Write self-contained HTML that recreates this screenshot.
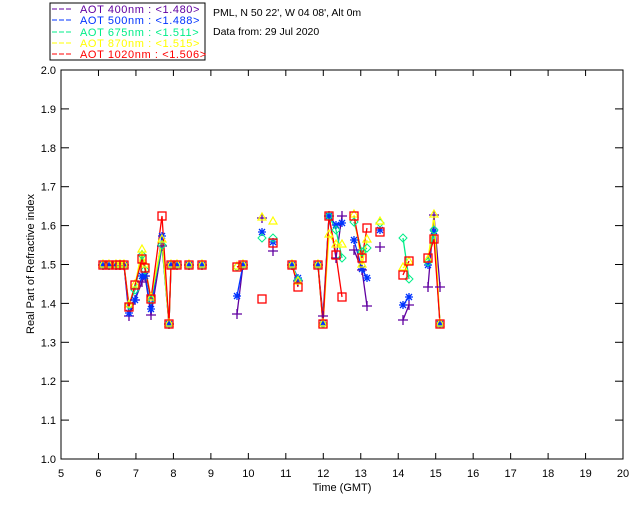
<!DOCTYPE html>
<html><head><meta charset="utf-8"><style>
html,body{margin:0;padding:0;background:#fff;width:640px;height:512px;overflow:hidden}
svg{display:block}
text{font-family:"Liberation Sans",sans-serif;font-size:11px}
.lg text{font-size:11px;letter-spacing:0.6px}
</style></head><body>
<svg id="s" width="640" height="512" xmlns="http://www.w3.org/2000/svg">
<rect x="50" y="3" width="155" height="57" fill="#fff" stroke="#000" stroke-width="1"/>
<g class="lg">
<line x1="52" y1="9" x2="73" y2="9" stroke="#6000a0" stroke-dasharray="5,2"/>
<text x="80" y="13" fill="#6000a0">AOT  400nm : &lt;1.480&gt;</text>
<line x1="52" y1="20" x2="73" y2="20" stroke="#0033ff" stroke-dasharray="5,2"/>
<text x="80" y="24" fill="#0033ff">AOT  500nm : &lt;1.488&gt;</text>
<line x1="52" y1="32" x2="73" y2="32" stroke="#00ee88" stroke-dasharray="5,2"/>
<text x="80" y="36" fill="#00ee88">AOT  675nm : &lt;1.511&gt;</text>
<line x1="52" y1="43" x2="73" y2="43" stroke="#ffff00" stroke-dasharray="5,2"/>
<text x="80" y="47" fill="#ffff00">AOT  870nm : &lt;1.515&gt;</text>
<line x1="52" y1="54" x2="73" y2="54" stroke="#ff0000" stroke-dasharray="5,2"/>
<text x="80" y="58" fill="#ff0000">AOT 1020nm : &lt;1.506&gt;</text>
</g>
<text x="213" y="16" fill="#000" style="font-size:10.5px">PML, N 50 22', W 04 08', Alt 0m</text>
<text x="213" y="35" fill="#000" style="font-size:10.5px">Data from: 29 Jul 2020</text>
<rect x="61" y="70" width="562" height="389" fill="none" stroke="#000"/>
<g id="ax"></g>
<g id="pl"></g>
<text x="342" y="491" text-anchor="middle">Time (GMT)</text>
<text transform="translate(34,264) rotate(-90)" text-anchor="middle">Real Part of Refractive index</text>
</svg>
<script>
var NS="http://www.w3.org/2000/svg",ax=document.getElementById('ax'),pl=document.getElementById('pl');
function el(t,a,p){var e=document.createElementNS(NS,t);for(var k in a)e.setAttribute(k,a[k]);(p||pl).appendChild(e);return e;}
for(var h=5;h<=20;h++){var x=61+(h-5)*37.47;
 if(h>5&&h<20){el('line',{x1:x,y1:459,x2:x,y2:453,stroke:'#000'},ax);el('line',{x1:x,y1:70,x2:x,y2:76,stroke:'#000'},ax);}
 var t=el('text',{x:x,y:477,'text-anchor':'middle'},ax);t.textContent=h;}
for(var i=0;i<=10;i++){var y=459-i*38.9;
 if(i>0&&i<10){el('line',{x1:61,y1:y,x2:69,y2:y,stroke:'#000'},ax);el('line',{x1:623,y1:y,x2:615,y2:y,stroke:'#000'},ax);}
 var t=el('text',{x:56,y:y+4,'text-anchor':'end'},ax);t.textContent=(1+i/10).toFixed(1);}
var G=[
[[103,265,265,265,265,265],[109,265,265,265,265,265],[116,265,265,265,265,265],[120,265,265,265,265,265],[124,265,265,265,265,265],[129,307,313,305,305,316],[135,285,300,290,285,300],[142,259,276,255,250,282],[145,268,276,270,265,276],[151,299,309,300,298,315],[162,216,236,245,240,246],[169,324,324,324,324,324],[171,265,265,265,265,265],[177,265,265,265,265,265]],
[[189,265,265,265,265,265]],[[202,265,265,265,265,265]],
[[237,267,296,267,267,314],[243,265,265,265,265,265]],
[[262,299,232,238,218,218]],
[[273,243,242,238,222,251]],
[[292,265,265,265,265,265],[298,287,278,280,282,281]],
[[318,265,265,265,265,265],[323,324,323,324,324,316],[329,216,216,216,235,216],[336,255,225,230,245,258],[342,297,223,258,245,216]],
[[354,216,240,222,215,250],[362,258,269,252,265,270],[367,228,278,248,240,306]],
[[380,232,230,223,222,247]],
[[403,275,305,238,268,320],[409,261,297,279,262,305]],
[[428,258,265,262,260,287],[434,239,231,230,215,215],[440,324,324,324,324,287]]];
var C=['#ff0000','#0033ff','#00ee88','#ffff00','#6000a0'];
[4,1,2,3,0].forEach(function(s){
 G.forEach(function(g){
  if(g.length>1)el('polyline',{points:g.map(function(p){return p[0]+','+p[s+1]}).join(' '),fill:'none',stroke:C[s],'stroke-width':1.3});
 });
});
[4,1,2,3,0].forEach(function(s){
 G.forEach(function(g){g.forEach(function(p){var x=p[0],y=p[s+1],c=C[s];
  if(s==0)el('rect',{x:x-4,y:y-4,width:8,height:8,fill:'none',stroke:c,'stroke-width':1.3});
  else if(s==1){el('path',{d:'M'+(x-4)+' '+y+'h8M'+x+' '+(y-4)+'v8M'+(x-3)+' '+(y-3)+'l6 6M'+(x+3)+' '+(y-3)+'l-6 6',stroke:c,'stroke-width':1.3});}
  else if(s==2)el('path',{d:'M'+x+' '+(y-4)+'l4 4l-4 4l-4-4z',fill:'none',stroke:c});
  else if(s==3)el('path',{d:'M'+x+' '+(y-5)+'l4 7h-8z',fill:'none',stroke:c,'stroke-width':1.2});
  else el('path',{d:'M'+(x-5)+' '+y+'h10M'+x+' '+(y-5)+'v10',stroke:c,'stroke-width':1.3});
 });});
});
</script>
</body></html>
